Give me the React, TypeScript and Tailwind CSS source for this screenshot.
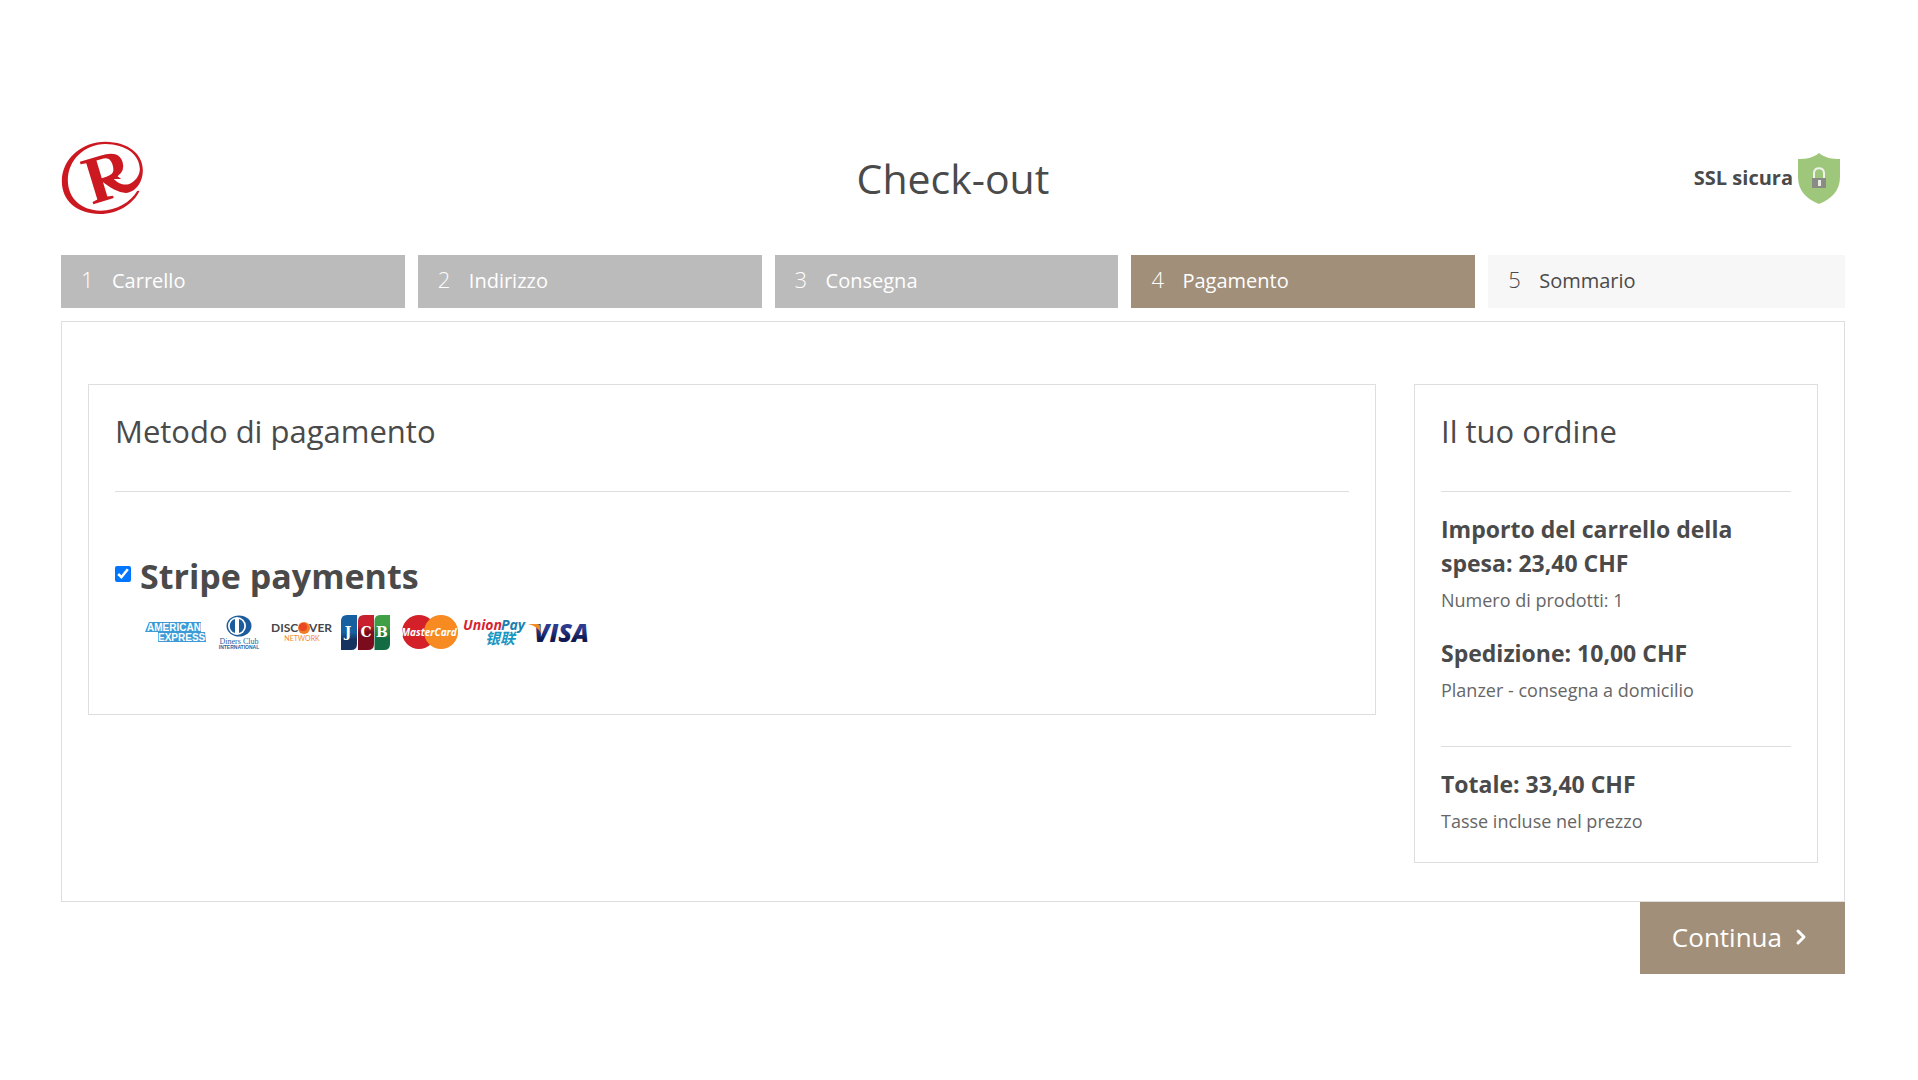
import React from 'react';
import { ChevronRight } from 'lucide-react';

const steps = ['Carrello', 'Indirizzo', 'Consegna', 'Pagamento', 'Sommario'];
const currentStep = 3;

const stepColor = (index: number) => {
  if (index === currentStep) return 'bg-[#a18f7a] text-white';
  if (index < currentStep) return 'bg-[#bbbbbb] text-white';
  return 'bg-[#f7f7f7] text-[#4a4a4a]';
};

const Logo = () => (
  <svg viewBox="34 34 248 222" className="w-[83px] h-[74px] overflow-visible" role="img" aria-label="Logo">
    <defs>
      <clipPath id="letter">
        <path d="M60 50 H240 V148 H192 V240 H60 Z" />
      </clipPath>
    </defs>
    <path
      fill="#cc1820"
      d="M269 183 C252 222 205 252 150 253 C82 253 36 214 36 155 C36 88 95 36 167 36 C235 37 279 72 279 122 C279 158 258 188 228 190 C206 189 182 176 152 152 L182 138 C198 156 214 168 236 164 C256 156 270 138 270 118 C269 74 227 44 167 43 C103 43 54 93 54 151 C54 208 96 242 152 243 C202 243 243 216 262 184 Z"
    />
    <g clipPath="url(#letter)">
      <text
        x="126"
        y="225"
        transform="rotate(-17 126 225)"
        fontFamily="Liberation Serif, serif"
        fontWeight="700"
        fontSize="204"
        fill="#cc1820"
      >
        R
      </text>
    </g>
  </svg>
);

const Shield = () => (
  <svg viewBox="0 0 42 51" className="w-[42px] h-[51px]" aria-hidden="true">
    <path fill="#9fc77b" d="M21 0 C15 5 8 6 0 6 V24 C0 38 9 46 21 51 C33 46 42 38 42 24 V6 C34 6 27 5 21 0 Z" />
    <path fill="none" stroke="#f0f3ec" strokeWidth="2" d="M16 25 V20 C16 13.500 26 13.500 26 20 V25" />
    <rect x="14" y="25" width="14" height="10" fill="#8b8b86" />
    <path fill="#e8eee2" d="M20 27 h3 v6 h-3 z" />
  </svg>
);

const Amex = () => (
  <svg viewBox="0 0 64 40" className="w-16 h-10" role="img" aria-label="American Express">
    <path fill="#3c9bd6" d="M6 10 H58 V20 H62 L63 30 H15 V20 H2 Z" />
    <g fontFamily="Liberation Sans, sans-serif" fontWeight="700" fontSize="10" fill="#fff">
      <text x="4" y="19">AMERICAN</text>
      <text x="15" y="29">EXPRESS</text>
    </g>
  </svg>
);

const Diners = () => (
  <svg viewBox="0 0 64 40" className="w-16 h-10" role="img" aria-label="Diners Club International">
    <ellipse cx="32" cy="14" rx="12.500" ry="10.500" fill="#1d5c9c" />
    <circle cx="30" cy="14" r="9" fill="#fff" />
    <path fill="#1d5c9c" d="M28 7 C21 9 21 19 28 21 Z M32 7 C39 9 39 19 32 21 Z" />
    <g fill="#2a659f" textAnchor="middle">
      <text x="32" y="32" fontFamily="Liberation Serif, serif" fontSize="8">Diners Club</text>
      <text x="32" y="37" fontFamily="Liberation Sans, sans-serif" fontWeight="700" fontSize="5">INTERNATIONAL</text>
    </g>
  </svg>
);

const Discover = () => (
  <svg viewBox="0 0 64 40" className="w-16 h-10" role="img" aria-label="Discover Network">
    <g fontFamily="Lato, sans-serif" fontWeight="700" fontSize="12" fill="#474749">
      <text x="0" y="20">DISC</text>
      <text x="61" y="20" textAnchor="end">VER</text>
    </g>
    <circle cx="33" cy="16" r="6" fill="#f07a26" />
    <circle cx="32" cy="15" r="4" fill="#e8471f" />
    <text x="31" y="29" textAnchor="middle" fontFamily="Lato, sans-serif" fontSize="7" fill="#f08a2c">NETWORK</text>
  </svg>
);

const Jcb = () => (
  <svg viewBox="0 0 64 40" className="w-16 h-10" role="img" aria-label="JCB">
    <defs>
      <linearGradient id="jcb-blue" x2="0" y2="1">
        <stop offset="0.500" stopColor="#1660a0" />
        <stop offset="0.700" stopColor="#16335f" />
      </linearGradient>
      <linearGradient id="jcb-red" x2="0" y2="1">
        <stop offset="0.300" stopColor="#c8202f" />
        <stop offset="0.500" stopColor="#7a0c1e" />
      </linearGradient>
      <linearGradient id="jcb-green" x2="0" y2="1">
        <stop offset="0.300" stopColor="#3f9f47" />
        <stop offset="0.700" stopColor="#126b42" />
      </linearGradient>
    </defs>
    <path fill="url(#jcb-blue)" d="M12 3 H22 V32 Q22 38 16 38 H6 V9 Q6 3 12 3 Z" />
    <path fill="url(#jcb-red)" d="M29 3 H39 V32 Q39 38 33 38 H23 V9 Q23 3 29 3 Z" />
    <path fill="url(#jcb-green)" d="M45 3 H55 V32 Q55 38 49 38 H39.500 V9 Q39.500 3 45 3 Z" />
    <g fontFamily="DejaVu Serif, serif" fontWeight="700" fontSize="14" fill="#fff" textAnchor="middle">
      <text x="13" y="25">J</text>
      <text x="31" y="25">C</text>
      <text x="47" y="25">B</text>
    </g>
  </svg>
);

const Mastercard = () => (
  <svg viewBox="0 0 64 40" className="w-16 h-10" role="img" aria-label="MasterCard">
    <circle cx="20" cy="20" r="17" fill="#d32029" />
    <circle cx="42" cy="20" r="17" fill="#f78a20" />
    <text
      x="30"
      y="24"
      textAnchor="middle"
      fontFamily="Open Sans, sans-serif"
      fontStyle="italic"
      fontWeight="700"
      fontSize="10"
      fill="#fff"
    >
      MasterCard
    </text>
  </svg>
);

const UnionPay = () => (
  <svg viewBox="0 0 64 40" className="w-16 h-10" role="img" aria-label="UnionPay">
    <g fontFamily="Open Sans, sans-serif" fontStyle="italic" fontWeight="700" fontSize="14">
      <text x="0" y="18" fill="#d8232f">Union</text>
      <text x="38" y="18" fill="#1c7fb0">Pay</text>
    </g>
    <text
      x="22"
      y="32"
      fontFamily="Noto Sans CJK SC, sans-serif"
      fontStyle="italic"
      fontWeight="700"
      fontSize="15"
      fill="#1797c4"
    >
      银联
    </text>
  </svg>
);

const Visa = () => (
  <svg viewBox="0 0 64 40" className="w-16 h-10" role="img" aria-label="Visa">
    <defs>
      <linearGradient id="visa-blue" x2="0" y2="1">
        <stop offset="0.400" stopColor="#2b3c8e" />
        <stop offset="0.700" stopColor="#101a50" />
      </linearGradient>
    </defs>
    <text
      x="7"
      y="30"
      fontFamily="Open Sans, sans-serif"
      fontStyle="italic"
      fontWeight="800"
      fontSize="25"
      fill="url(#visa-blue)"
    >
      VISA
    </text>
    <path fill="#f08c22" d="M1 12 H10 Q13 12 13 15 L14 21 Q10 14 1 12 Z" />
  </svg>
);

const Header = () => (
  <header className="grid grid-cols-3 items-center h-[74px]">
    <Logo />
    <h1 className="text-[41px] leading-[54px] text-center">Check-out</h1>
    <div className="flex items-center justify-end gap-[5px] pr-[5px]">
      <span className="text-[20px] font-bold">SSL sicura</span>
      <Shield />
    </div>
  </header>
);

const StepBar = () => (
  <ol className="grid grid-cols-5 mt-10">
    {steps.map((step, index) => (
      <li key={step} className="pr-[13px] last:pr-0">
        <div className={`flex items-baseline h-[53px] pt-[6px] px-5 ${stepColor(index)}`}>
          <span className="w-[31px] text-[22px] leading-[36px] font-light">{index + 1}</span>
          <span className="text-[20px]">{step}</span>
        </div>
      </li>
    ))}
  </ol>
);

const PaymentMethod = () => (
  <section className="flex-1 h-[331px] px-[26px] border border-[#dedede]">
    <h2 className="h-[107px] pt-[25px] text-[31px] leading-[42px] border-b border-[#dedede]">Metodo di pagamento</h2>
    <div className="flex items-center gap-[9px] mt-[61px]">
      <input id="stripe" type="checkbox" defaultChecked className="size-4 mb-1 accent-[#0075ff]" />
      <label htmlFor="stripe" className="text-[34px] leading-[46px] font-bold">Stripe payments</label>
    </div>
    <div className="flex pl-7 mt-[13px]">
      <Amex />
      <Diners />
      <Discover />
      <Jcb />
      <Mastercard />
      <UnionPay />
      <Visa />
    </div>
  </section>
);

const OrderSummary = () => (
  <aside className="w-[404px] shrink-0 px-[26px] pb-[25px] border border-[#dedede]">
    <h2 className="h-[107px] pt-[25px] text-[31px] leading-[42px] border-b border-[#dedede]">Il tuo ordine</h2>
    <p className="mt-5 text-[23px] leading-[34px] font-bold">Importo del carrello della spesa: 23,40 CHF</p>
    <p className="mt-1 text-[18px] leading-[32px] text-[#666666]">Numero di prodotti: 1</p>
    <p className="mt-5 text-[23px] leading-[34px] font-bold">Spedizione: 10,00 CHF</p>
    <p className="mt-1 text-[18px] leading-[32px] text-[#666666]">Planzer - consegna a domicilio</p>
    <hr className="mt-10 border-[#dedede]" />
    <p className="mt-5 text-[23px] leading-[34px] font-bold">Totale: 33,40 CHF</p>
    <p className="mt-1 text-[18px] leading-[32px] text-[#666666]">Tasse incluse nel prezzo</p>
  </aside>
);

const App = () => {
  return (
    <div className="pl-[61px] pr-[73px] pt-[141px] pb-20 bg-white text-[#4a4a4a] font-['Open_Sans',sans-serif]">
      <Header />
      <StepBar />
      <main className="flex items-start gap-[38px] mt-[13px] px-[26px] pt-[62px] pb-[38px] border border-[#dedede]">
        <PaymentMethod />
        <OrderSummary />
      </main>
      <div className="flex justify-end">
        <button className="flex items-center gap-[7px] h-[72px] pl-8 pr-8 pb-[2px] bg-[#a18f7a] text-white text-[26px]">
          Continua
          <ChevronRight className="size-6" strokeWidth={3} />
        </button>
      </div>
    </div>
  );
};

export default App;
